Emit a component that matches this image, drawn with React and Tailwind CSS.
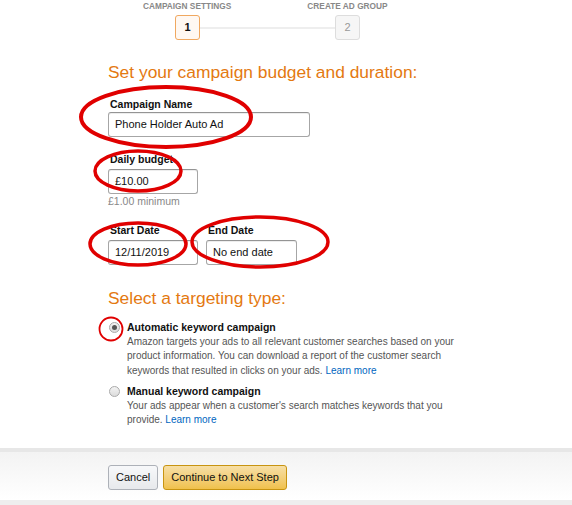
import React from 'react';

const font = { fontFamily: '"Liberation Sans", Arial, sans-serif' };

function Field({ label, value, width, className = '' }) {
  return (
    <div className={className}>
      <div className="text-[10.5px] font-bold leading-[14px] text-[#111] pl-[2px]">{label}</div>
      <div
        className="mt-[3px] h-[25px] rounded-[3px] border border-[#a6a6a6] border-t-[#949494] bg-white px-[6px] flex items-center text-[11px] text-[#111] shadow-[inset_0_1px_0_rgba(0,0,0,0.07)]"
        style={{ width }}
      >
        {value}
      </div>
    </div>
  );
}

function Radio({ checked }) {
  return (
    <span className="mt-[2px] w-[11px] h-[11px] rounded-full border border-[#aaa] bg-gradient-to-b from-[#f3f3f3] to-[#dcdcdc] flex items-center justify-center shrink-0">
      {checked && <span className="w-[5px] h-[5px] rounded-full bg-[#555]" />}
    </span>
  );
}

export default function App() {
  return (
    <div className="relative w-[572px] h-[505px] overflow-hidden bg-white" style={font}>
      {/* stepper */}
      <div className="relative h-[48px]">
        <div className="flex pl-[143px] pt-[1px] text-[8.3px] font-bold text-[#888] leading-[10px]">
          <span>CAMPAIGN SETTINGS</span>
          <span className="ml-[76px]">CREATE AD GROUP</span>
        </div>
        <div className="flex items-center pl-[175px] mt-[4px]">
          <div className="w-[25px] h-[25px] rounded-[3px] border border-[#f0a860] bg-[#fff8f2] flex items-center justify-center text-[11px] font-bold text-[#111]">1</div>
          <div className="w-[135px] h-[2px] bg-[#eeeeee]" />
          <div className="w-[25px] h-[25px] rounded-[3px] border border-[#ddd] bg-[#f6f6f6] flex items-center justify-center text-[11px] text-[#999]">2</div>
        </div>
      </div>

      {/* form */}
      <div className="pl-[108px]">
        <h2 className="mt-[14px] text-[17.4px] leading-[20px] text-[#e47911]">Set your campaign budget and duration:</h2>

        <Field label="Campaign Name" value="Phone Holder Auto Ad" width={202} className="mt-[15px] [&>div:last-child]:mt-[1px]" />

        <div className="mt-[15px]">
          <Field label="Daily budget" value="£10.00" width={90} />
          <div className="mt-[1px] text-[10.5px] leading-[13px] text-[#888]">£1.00 minimum</div>
        </div>

        <div className="mt-[15px] flex gap-[8px]">
          <Field label="Start Date" value="12/11/2019" width={90} />
          <Field label="End Date" value="No end date" width={91} />
        </div>

        <h2 className="mt-[23px] text-[17.4px] leading-[20px] text-[#e47911]">Select a targeting type:</h2>

        <div className="mt-[12px] text-[10px] leading-[14.5px]">
          <div className="flex gap-[7px] pl-[1px]">
            <Radio checked />
            <div>
              <div className="font-bold text-[10.5px] text-[#111]">Automatic keyword campaign</div>
              <div className="text-[#555] w-[334px]">
                Amazon targets your ads to all relevant customer searches based on your product information. You can download a report of the customer search keywords that resulted in clicks on your ads. <span className="text-[#0066c0]">Learn more</span>
              </div>
            </div>
          </div>
          <div className="flex gap-[7px] pl-[1px] mt-[6px]">
            <Radio />
            <div>
              <div className="font-bold text-[10.5px] text-[#111]">Manual keyword campaign</div>
              <div className="text-[#555] w-[334px]">
                Your ads appear when a customer's search matches keywords that you provide. <span className="text-[#0066c0]">Learn more</span>
              </div>
            </div>
          </div>
        </div>
      </div>

      {/* footer */}
      <div className="absolute left-0 right-0 top-[448px] h-[4px] bg-[#e7e7e7]" />
      <div className="absolute left-0 right-0 top-[452px] h-[48px] bg-gradient-to-b from-[#f3f3f3] to-white flex items-center pl-[108px] gap-[5px] pt-[3px]">
        <button className="h-[25px] px-[7px] rounded-[3px] border border-[#adb1b8] bg-gradient-to-b from-[#f7f8fa] to-[#e7e9ec] text-[11px] text-[#111]">Cancel</button>
        <button className="h-[25px] px-[7px] rounded-[3px] border border-[#c89411] bg-gradient-to-b from-[#f7dfa5] to-[#f0c14b] text-[11px] text-[#111]">Continue to Next Step</button>
      </div>
      <div className="absolute left-0 right-0 top-[500px] h-[5px] bg-[#eeeeee]" />

      {/* red annotation marks */}
      <svg className="absolute inset-0 pointer-events-none" width="572" height="505" viewBox="0 0 572 505">
        <g fill="none" stroke="#e00000">
          <ellipse cx="166" cy="117" rx="85" ry="30" strokeWidth="4" />
          <ellipse cx="138" cy="171" rx="43" ry="20" strokeWidth="3.5" />
          <ellipse cx="138" cy="244" rx="48" ry="21" strokeWidth="3.5" />
          <ellipse cx="260" cy="242" rx="68" ry="25" strokeWidth="3.5" />
          <circle cx="111" cy="329" r="11.5" strokeWidth="1.8" />
        </g>
      </svg>
    </div>
  );
}
